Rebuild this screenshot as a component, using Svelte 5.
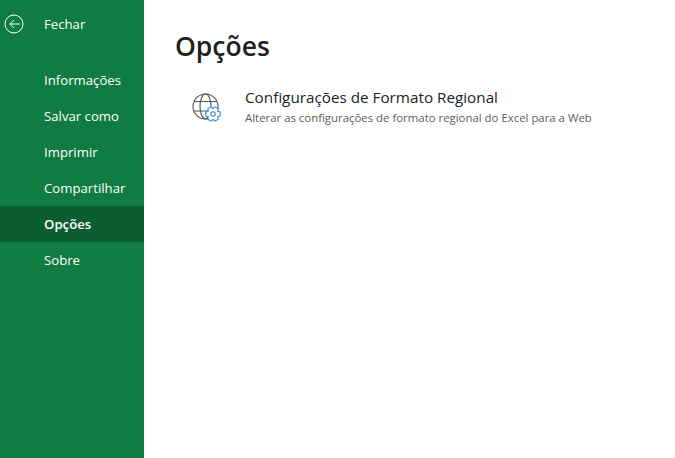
<script>
  const items = ['Informações', 'Salvar como', 'Imprimir', 'Compartilhar', 'Opções', 'Sobre'];
  const selected = 'Opções';

  // six toothed gear around 0,0
  const gear = [];
  for (let i = 0; i < 6; i++) {
    const a = (i * Math.PI) / 3;
    for (const [r, d] of [[5.4, -0.52], [7.4, -0.26], [7.4, 0.26], [5.4, 0.52]]) {
      gear.push(`${(r * Math.cos(a + d)).toFixed(2)},${(r * Math.sin(a + d)).toFixed(2)}`);
    }
  }
</script>

<div class="page">
  <nav class="side">
    <div class="close">
      <svg class="back" width="20" height="20" viewBox="0 0 20 20" fill="none" stroke="#fff" stroke-width="1">
        <circle cx="10" cy="10" r="9" />
        <path d="M15.5 10H6M9.8 6 5.8 10l4 4" />
      </svg>
      <span>Fechar</span>
    </div>
    <ul>
      {#each items as item}
        <li class:active={item === selected}>{item}</li>
      {/each}
    </ul>
  </nav>

  <main>
    <h1>Opções</h1>
    <div class="row">
      <svg class="globe" width="30" height="30" viewBox="0 0 30 30" fill="none">
        <g stroke="#555" stroke-width="1.1">
          <circle cx="13.5" cy="13.5" r="12.5" />
          <ellipse cx="13.5" cy="13.5" rx="5.5" ry="12.5" />
          <path d="M2 8.5h23M2 18h23" />
        </g>
        <polygon points={gear.join(' ')} transform="translate(21 21)" fill="#fff" stroke="#2b88d8" stroke-width="1.1" stroke-linejoin="round" />
        <circle cx="21" cy="21" r="2.2" stroke="#2b88d8" stroke-width="1.1" />
      </svg>
      <div class="text">
        <div class="title">Configurações de Formato Regional</div>
        <div class="sub">Alterar as configurações de formato regional do Excel para a Web</div>
      </div>
    </div>
  </main>
</div>

<style>
  :global(body) {
    background: #fff;
  }

  .page {
    display: flex;
    height: 458px;
    overflow: hidden;
    font-family: "Open Sans", "Noto Sans", sans-serif;
  }

  .side {
    width: 144px;
    flex-shrink: 0;
    background: #107c41;
    color: #fff;
    font-size: 13.2px;
  }

  .close {
    position: relative;
    height: 36px;
    margin-top: 6px;
    padding-left: 44px;
    display: flex;
    align-items: center;
  }

  .back {
    position: absolute;
    left: 3.5px;
    top: 7.5px;
  }

  ul {
    list-style: none;
    margin: 20px 0 0;
    padding: 0;
  }

  li {
    height: 36px;
    line-height: 36px;
    padding-left: 44px;
  }

  li.active {
    background: #0c5e32;
    font-weight: 600;
  }

  main {
    flex: 1;
    padding: 27px 0 0 31px;
    color: #201f1e;
  }

  h1 {
    margin: 0;
    font-size: 26.5px;
    line-height: 38px;
    font-weight: 600;
  }

  .row {
    display: flex;
    margin-top: 20px;
    padding-left: 17px;
  }

  .globe {
    margin-top: 8px;
    flex-shrink: 0;
  }

  .text {
    margin-left: 23px;
  }

  .title {
    font-size: 15.25px;
    line-height: 24px;
  }

  .sub {
    margin-top: 1px;
    font-size: 11.4px;
    line-height: 16px;
    color: #605e5c;
  }
</style>
